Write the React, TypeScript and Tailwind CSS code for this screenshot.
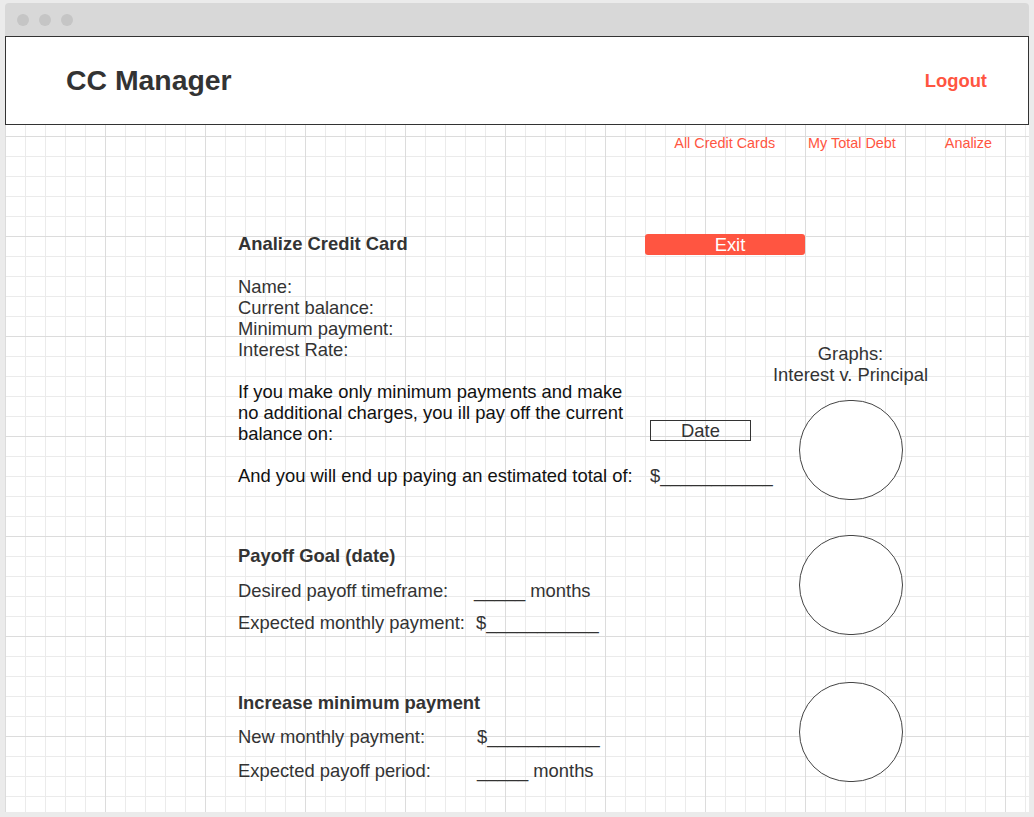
const RED = "text-[#ff5541]";

function Circle() {
  return <div className="h-[100px] w-[104px] rounded-full border border-[#444] bg-white" />;
}

function Row({ label, labelWidth, value }: { label: string; labelWidth: string; value: string }) {
  return (
    <div className="flex whitespace-pre leading-[21px] text-[#333]">
      <span className={`${labelWidth} shrink-0`}>{label}</span>
      <span>{value}</span>
    </div>
  );
}

export default function App() {
  return (
    <div className="h-[817px] w-[1034px] overflow-hidden bg-[#ebebeb] px-[5px] pt-[3px] font-['Liberation_Sans',Arial,sans-serif] text-[18.4px]">
      <div className="w-[1024px]">
        {/* window chrome */}
        <div className="flex h-[33px] items-center gap-[10px] rounded-t-[4px] bg-[#d8d8d8] pl-[12px]">
          <span className="h-[12px] w-[12px] rounded-full bg-[#c5c5c5]" />
          <span className="h-[12px] w-[12px] rounded-full bg-[#c5c5c5]" />
          <span className="h-[12px] w-[12px] rounded-full bg-[#c5c5c5]" />
        </div>

        <div className="h-[776px] overflow-hidden bg-white [background-image:linear-gradient(to_right,#dcdcdc_1px,transparent_1px),linear-gradient(to_bottom,#dcdcdc_1px,transparent_1px),linear-gradient(to_right,#ebebeb_1px,transparent_1px),linear-gradient(to_bottom,#ebebeb_1px,transparent_1px)] [background-size:100px_100px,100px_100px,20px_20px,20px_20px]">
          <header className="flex h-[89px] items-center justify-between border border-[#333] bg-white pl-[60px] pr-[41px]">
            <h1 className="text-[28.4px] font-bold text-[#333]">CC Manager</h1>
            <button className={`text-[18.4px] font-bold ${RED}`}>Logout</button>
          </header>

          <nav className={`flex justify-end pr-[37px] pt-[10px] text-[14.4px] leading-[16px] ${RED}`}>
            <a>All Credit Cards</a>
            <a className="ml-[33px]">My Total Debt</a>
            <a className="ml-[49px]">Analize</a>
          </nav>

          <main className="ml-[233px] mt-[82px]">
            <section className="flex">
              <div className="w-[532px] shrink-0">
                <div className="flex h-[21px] items-center">
                  <h2 className="w-[407px] shrink-0 font-bold leading-[21px] text-[#333]">Analize Credit Card</h2>
                  <button className="mt-[2px] h-[21px] w-[160px] shrink-0 rounded-[3px] bg-[#ff5541] pl-[10px] leading-[21px] text-white">
                    Exit
                  </button>
                </div>
                <div className="mt-[22px] leading-[21px] text-[#333]">
                  <p>Name:</p>
                  <p>Current balance:</p>
                  <p>Minimum payment:</p>
                  <p>Interest Rate:</p>
                </div>
                <div className="mt-[21px] flex items-end">
                  <div className="w-[412px] shrink-0">
                    <p className="w-[400px] leading-[21px] text-[#111]">
                      If you make only minimum payments and make no additional charges, you ill pay off the current balance on:
                    </p>
                  </div>
                  <div className="mb-[3px] flex h-[21px] w-[101px] items-center justify-center border border-[#333] leading-[19px] text-[#333]">
                    Date
                  </div>
                </div>
                <div className="mt-[21px] flex leading-[21px]">
                  <span className="w-[412px] shrink-0 text-[#111]">And you will end up paying an estimated total of:</span>
                  <span className="text-[#333]">$___________</span>
                </div>
              </div>
              <div className="flex w-[161px] flex-col items-center pt-[110px]">
                <p className="whitespace-nowrap text-center leading-[21px] text-[#333]">
                  Graphs:
                  <br />
                  Interest v. Principal
                </p>
                <div className="mt-[15px]">
                  <Circle />
                </div>
              </div>
            </section>

            <section className="mt-[35px] flex">
              <div className="w-[532px] shrink-0 pt-[10px]">
                <h3 className="font-bold leading-[21px] text-[#333]">Payoff Goal (date)</h3>
                <div className="mt-[14px]">
                  <Row label="Desired payoff timeframe:" labelWidth="w-[236px]" value="_____ months" />
                </div>
                <div className="mt-[11px]">
                  <Row label="Expected monthly payment:" labelWidth="w-[238px]" value="$___________" />
                </div>
              </div>
              <div className="flex w-[161px] justify-center">
                <Circle />
              </div>
            </section>

            <section className="mt-[47px] flex">
              <div className="w-[532px] shrink-0 pt-[10px]">
                <h3 className="font-bold leading-[21px] text-[#333]">Increase minimum payment</h3>
                <div className="mt-[13px]">
                  <Row label="New monthly payment:" labelWidth="w-[239px]" value="$___________" />
                </div>
                <div className="mt-[13px]">
                  <Row label="Expected payoff period:" labelWidth="w-[239px]" value="_____ months" />
                </div>
              </div>
              <div className="flex w-[161px] justify-center">
                <Circle />
              </div>
            </section>
          </main>
        </div>
      </div>
    </div>
  );
}
